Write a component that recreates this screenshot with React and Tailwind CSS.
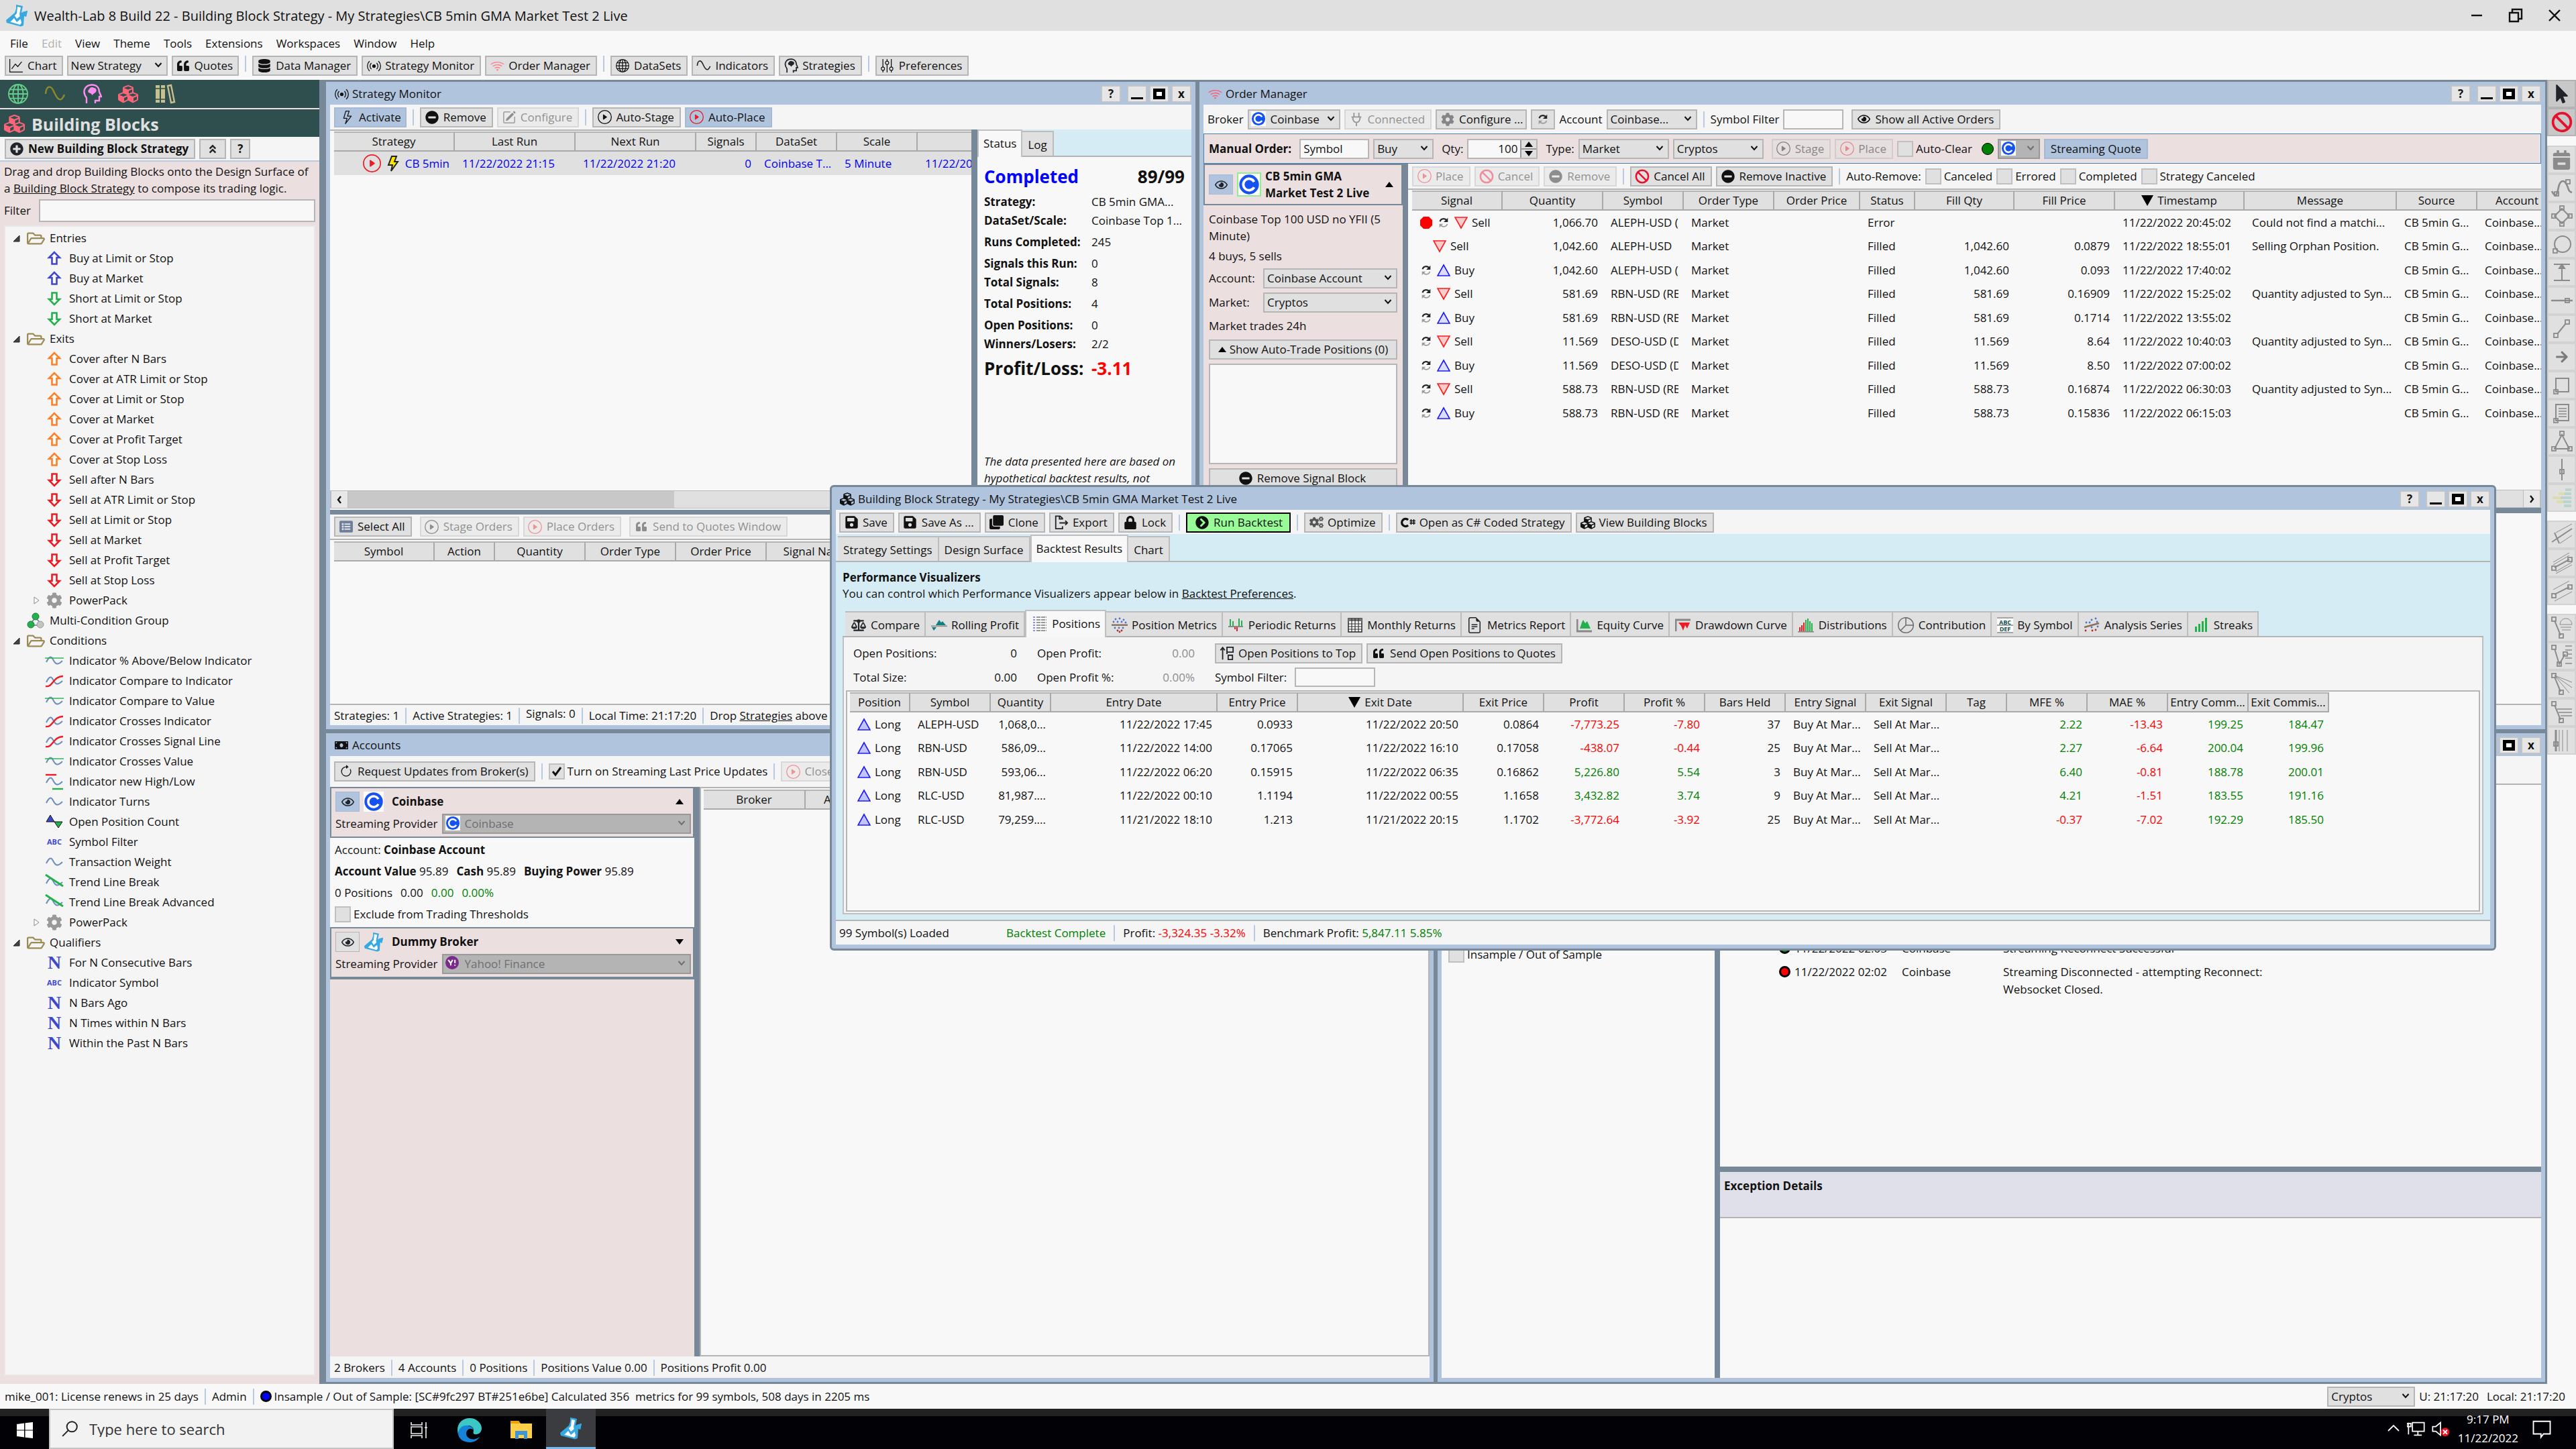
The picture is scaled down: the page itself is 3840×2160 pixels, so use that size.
import React from "react";
import {
  FaQuoteLeft, FaDatabase, FaPlusCircle, FaMinusCircle, FaAngleDoubleUp, FaCubes, FaSave, FaClone, FaLock,
  FaChevronCircleRight, FaCogs, FaCog, FaRegFolderOpen, FaRegEye, FaBalanceScale,
  FaMoneyBill, FaArrowRight, FaListAlt, FaMousePointer, FaCalendarMinus,
} from "react-icons/fa";
import {
  BsBroadcast, BsWifi, BsLightning, BsPlayCircle, BsPencilSquare, BsGlobe, BsGraphUp, BsFileEarmarkText,
  BsPieChart, BsArrowClockwise, BsSliders,
} from "react-icons/bs";

/* ---------- drawings ---------- */

const Svg = ({ size = 24, box = 24, className = "", children }) => (
  <svg width={size} height={size} viewBox={`0 0 ${box} ${box}`} fill="none" className={`shrink-0 ${className}`} aria-hidden="true">
    {children}
  </svg>
);

const Flask = ({ size = 34 }) => (
  <Svg size={size} box={34}>
    <path d="M16 1 L26 3 L25 8 L24 13 L33 10 L31 19 L28 18 L27 32 L23 33.500 L2 28 L1 24 L14 13 L16 7 Z" fill="#35a9e0" />
    <path d="M18 4 L23 5 L21 15 L24 28 L22 31 L5 26 L17 14 Z" fill="#ffffff" />
    <path d="M3 25 L13 16 L17 22 L27 14 L25 12 L33 10 L31 19 L29 17 L17 27 L13 21 L6 28 Z" fill="#35a9e0" />
  </Svg>
);

const Coinbase = ({ size = 26 }) => (
  <Svg size={size} className="bg-white">
    <circle cx="12" cy="12" r="11" fill="#1652f0" />
    <path d="M17.600 9 A6.400 6.400 0 1 0 17.600 15" stroke="#fff" strokeWidth="2.800" />
  </Svg>
);

const Yahoo = () => (
  <Svg size={20}>
    <circle cx="12" cy="12" r="12" fill="#7b2a8b" />
    <path d="M5 7 L9.500 13 V17 M13 7 L9.500 13 M17 7 V13 M17 15.500 V17.500" stroke="#fff" strokeWidth="2.500" />
  </Svg>
);

const Ban = ({ size = 22 }) => (
  <Svg size={size}>
    <circle cx="12" cy="12" r="10" stroke="#e8112d" strokeWidth="2.800" />
    <path d="M5 5 L19 19" stroke="#e8112d" strokeWidth="2.800" />
  </Svg>
);

const Plug = () => (
  <Svg size={22}>
    <path d="M8 1 V8 M16 1 V8 M4 8 H20 M6 8 C6 14 8 17 12 17 C16 17 18 14 18 8 M12 17 V23" stroke="#212529" strokeWidth="2" />
  </Svg>
);

const Export = () => (
  <Svg size={22}>
    <path d="M14 7 V5 L10 1.500 H3 V22 H14 V18 M9 2 V6 H14 M9 12.500 H22 M18.500 9 L22 12.500 L18.500 16" stroke="#212529" strokeWidth="2" />
  </Svg>
);

const Tri = ({ up, strong }) => (
  <Svg size={20} box={20}>
    {up ? (
      <path d="M10 2 L19 18 H1 Z" fill={strong ? "#c3c3fb" : "#dcdcfb"} stroke="#1a1aff" strokeWidth="1.600" />
    ) : (
      <path d="M10 18 L19 2 H1 Z" fill="#fbcaca" stroke="#ff1a1a" strokeWidth="1.600" />
    )}
  </Svg>
);

const Repeat = ({ size = 18 }) => (
  <Svg size={size} box={20}>
    <path d="M4 8 C5 3 12 2 15 6" stroke="#212529" strokeWidth="2.400" />
    <path d="M17 2 V9 H10 Z" fill="#212529" />
    <path d="M16 12 C15 17 8 18 5 14" stroke="#9a9a9a" strokeWidth="1.800" />
    <path d="M3 18 V12 H9 Z" fill="#9a9a9a" />
  </Svg>
);

const Arrow = ({ down, color }) => (
  <Svg size={22} box={22}>
    <path
      d={down ? "M11 20 L3 12 H7.500 V2.500 H14.500 V12 H19 Z" : "M11 2 L3 10 H7.500 V19.500 H14.500 V10 H19 Z"}
      stroke={color}
      strokeWidth="2.600"
      fill="#fff"
    />
  </Svg>
);

const wave = "M2 16 C6 8 9 6 12 12 S18 22 26 14";
const Ind = ({ kind }) => (
  <Svg size={28} box={28}>
    <path d={wave} stroke="#6c8ebf" strokeWidth="2" />
    {kind === "line" && <path d="M0 10 H28" stroke="#22b14c" strokeWidth="1.400" />}
    {kind === "cross" && <path d="M1 22 C12 24 12 7 27 7" stroke="#ed1c24" strokeWidth="2.400" />}
    {kind === "hilo" && (
      <>
        <path d="M1 4 H17" stroke="#ed1c24" strokeWidth="2.400" />
        <path d="M11 25 H27" stroke="#22b14c" strokeWidth="2.400" />
      </>
    )}
    {kind === "trend" && <path d="M1 3 L27 20" stroke="#22b14c" strokeWidth="3" />}
  </Svg>
);

const Count = () => (
  <Svg size={28} box={28}>
    <path d="M2 14 L8 4 L14 14 Z" fill="#3f48cc" stroke="#111" />
    <path d="M14 14 H26 L20 23 Z" fill="#22b14c" stroke="#111" />
  </Svg>
);

const Group = () => (
  <Svg size={26} box={26}>
    <path d="M13 8 L4 20 H22 Z" stroke="#6c7a9c" strokeWidth="1.600" />
    <circle cx="13" cy="7" r="5" fill="#22b14c" stroke="#1c7a38" />
    <circle cx="6" cy="19" r="5" fill="#22b14c" stroke="#1c7a38" />
    <circle cx="20" cy="19" r="5" fill="#c3c3c3" stroke="#999" />
  </Svg>
);

const Head = ({ size = 30, color = "#ff8cf0" }) => (
  <Svg size={size} box={30}>
    <path d="M7 29 V21 C-1 10 6 1 16 1.500 C24 2 26 8 26 12 L29 19 H26 V25 H20 V29" stroke={color} strokeWidth="2.400" />
    <path d="M11 8 C12 5 16 4 18 6 C22 6 23 11 20 13 C18 15 17 14 16 17 L13 14 C9 14 8 10 11 8 Z" fill={color} />
  </Svg>
);

const Sine = ({ color = "#8a8a2a", size = 32 }) => (
  <Svg size={size} box={32}>
    <path d="M2 16 C3 3 10 3 14 12 S24 32 30 17" stroke={color} strokeWidth="2.400" />
  </Svg>
);

const Books = () => (
  <Svg size={32} box={32}>
    <path d="M2 3 H8 V29 H2 Z M10 3 H16 V29 H10 Z" fill="#c9bf8f" />
    <path d="M20 4 L25 3 L30 28 L25 29 Z" stroke="#c9bf8f" strokeWidth="2.400" />
    <path d="M2 8 H16 M2 24 H16" stroke="#2f4f4f" strokeWidth="1.400" />
  </Svg>
);

const ToTop = () => (
  <Svg size={22}>
    <path d="M5 22 V3 M1.500 7 L5 2.500 L8.500 7 M12 2 H22 V10 H12 Z M14 15 H21 V22 H14 Z M12 13 V10" stroke="#212529" strokeWidth="2" />
  </Svg>
);

const CSharp = () => (
  <Svg size={24}>
    <path d="M12 8 A5.500 5.500 0 1 0 12 16" stroke="#111" strokeWidth="3.400" />
    <path d="M16.500 7 V15 M20.500 7 V15 M14.500 9.500 H23 M14.500 12.700 H23" stroke="#111" strokeWidth="1.500" />
  </Svg>
);

const bars = (list, color) => list.map(([x, y, h]) => <rect key={`${x}-${y}`} x={x} y={y} width="2" height={h} fill={color} />);
const dots = (list, color) => list.map(([x, y]) => <circle key={`${x}-${y}`} cx={x} cy={y} r="1.400" fill={color} />);

const TabIcon = {
  compare: <FaBalanceScale size={22} className="text-[#212529]" />,
  rolling: (
    <Svg>
      <path d="M7 12 L12 4 L15 8 L17 6 L22 12 Z M1 15 H8 L4 20 Z" fill="#0f8080" />
      <rect y="12.500" width="24" height="1.600" fill="#888" />
    </Svg>
  ),
  positions: (
    <Svg>
      {[2, 6, 10, 14, 18, 22].map((y) => (
        <g key={y}>
          <rect x="2" y={y - 1} width="3" height="2" fill="#8c8cff" />
          <path d={`M7 ${y} H22`} stroke="#777" strokeWidth="1.500" strokeDasharray="6 1" />
        </g>
      ))}
    </Svg>
  ),
  metrics: (
    <Svg>
      {dots([[6, 3], [12, 2], [18, 4], [3, 7], [9, 7], [15, 7], [21, 8], [5, 16], [11, 16], [17, 16]], "#4a74c9")}
      {dots([[9, 20], [15, 20], [12, 22]], "#b02a2a")}
      <rect y="10.500" width="24" height="2.400" fill="#8c6f5a" />
    </Svg>
  ),
  periodic: (
    <Svg>
      {bars([[3, 3, 10], [7, 6, 7], [16, 2, 11], [20, 5, 8]], "#22b14c")}
      {bars([[10, 15, 3], [13, 15, 6]], "#ed1c24")}
      <rect x="1" y="13" width="22" height="2" fill="#888" />
    </Svg>
  ),
  monthly: (
    <Svg>
      <rect x="2" y="2" width="20" height="20" fill="#fff" stroke="#333" strokeWidth="1.600" />
      <rect x="2" y="2" width="20" height="4" fill="#777" />
      <path d="M7 2 V22 M12 2 V22 M17 2 V22 M2 10 H22 M2 14 H22 M2 18 H22" stroke="#333" strokeWidth="1.200" />
    </Svg>
  ),
  report: <BsFileEarmarkText size={24} className="text-[#212529]" />,
  equity: (
    <Svg>
      <path d="M1 3 V21 H23" stroke="#888" strokeWidth="3" />
      <path d="M5 17 L8 8 L10 4 L13 9 L16 6 L21 17 Z" fill="#22b14c" />
    </Svg>
  ),
  drawdown: (
    <Svg>
      <path d="M1 21 V4 H23" stroke="#888" strokeWidth="3" />
      <path d="M5 8 H22 L18 17 L15 12 L12 20 L9 13 Z" fill="#ed1c24" />
    </Svg>
  ),
  dist: (
    <Svg>
      {bars([[2, 15, 6], [5, 12, 9], [8, 8, 13]], "#ed1c24")}
      {bars([[11, 4, 17], [14, 2, 19], [17, 6, 15], [20, 9, 12]], "#22b14c")}
      <rect y="21" width="24" height="1.600" fill="#888" />
    </Svg>
  ),
  contribution: <BsPieChart size={24} className="text-[#6a6a6a]" />,
  symbol: (
    <svg width="24" height="24" viewBox="0 0 24 24" className="shrink-0 bg-white" aria-hidden="true">
      <path d="M0 1 H24 M0 12 H24 M0 23 H24" stroke="#888" strokeWidth="1.400" />
      <text x="12" y="10.500" fontSize="9" fontWeight="700" textAnchor="middle" fill="#0f4f50">ABC</text>
      <text x="12" y="21" fontSize="9" fontWeight="700" textAnchor="middle" fill="#0f4f50">DEF</text>
    </svg>
  ),
  analysis: (
    <Svg>
      {dots([[12, 4], [18, 2], [4, 8], [9, 8], [20, 7], [12, 15], [21, 14]], "#4a74c9")}
      {dots([[3, 20], [13, 20], [18, 19]], "#b02a2a")}
      <path d="M1 15 L23 9" stroke="#8c6f5a" strokeWidth="2.400" />
    </Svg>
  ),
  streaks: (
    <Svg>
      <rect x="3" y="14" width="3" height="8" fill="#22b14c" />
      <rect x="8" y="10" width="3" height="12" fill="#22b14c" />
      <rect x="13" y="6" width="3" height="16" fill="#22b14c" />
      <rect x="18" y="1" width="3" height="21" fill="#22b14c" />
    </Svg>
  ),
};

const sq = (x, y) => <rect key={`${x}-${y}`} x={x - 3} y={y - 3} width="6" height="6" strokeWidth="1.800" />;
const drawTools = [
  [
    ["Calendar", <FaCalendarMinus key="i" size={29} className="text-[#8b8b8b]" />],
    ["Curve", <g key="i"><path d="M2 22 C8 34 10 26 12 16 S20 4 24 12 S26 22 32 24" strokeWidth="2.600" />{sq(9, 26)}{sq(26, 8)}</g>],
    ["Diamond", <g key="i"><path d="M17 6 L28 17 L17 28 L6 17 Z" />{sq(17, 5)}{sq(29, 17)}{sq(17, 29)}{sq(5, 17)}</g>],
    ["Circle", <g key="i"><circle cx="18" cy="17" r="12" />{sq(7, 27)}</g>],
    ["Height", <g key="i"><path d="M5 5 H29 M5 29 H29 M17 6 V28" /><path d="M17 5 L13 11 H21 Z" fill="#8b8b8b" /></g>],
    ["Horizontal line", <g key="i"><path d="M1 17 H33" strokeWidth="2.400" />{sq(25, 17)}</g>],
    ["Line", <g key="i"><path d="M10 25 L23 9" />{sq(8, 27)}{sq(25, 7)}</g>],
    ["Arrow", <FaArrowRight key="i" size={20} className="text-[#7a7a7a]" />],
    ["Rectangle", <g key="i"><rect x="8" y="7" width="19" height="20" />{sq(8, 27)}</g>],
    ["Note", <g key="i"><rect x="8" y="4" width="19" height="24" /><path d="M12 10 H24 M12 14 H24 M12 18 H24 M12 22 H24" strokeWidth="1.600" />{sq(8, 28)}</g>],
    ["Triangle", <g key="i"><path d="M17 7 L28 28 H6 Z" />{sq(17, 5)}{sq(5, 28)}{sq(29, 28)}</g>],
    ["Vertical line", <g key="i"><path d="M17 1 V33" />{sq(17, 20)}</g>],
    ["Volume profile", <g key="i" stroke="none"><rect x="22" y="3" width="9" height="4" fill="#b9d3cf" /><rect x="12" y="9" width="9" height="4" fill="#dedbb0" /><rect x="21" y="9" width="10" height="4" fill="#b9d3cf" /><rect x="3" y="15" width="12" height="4" fill="#dedbb0" /><rect x="15" y="15" width="16" height="4" fill="#b9d3cf" /><rect x="9" y="21" width="10" height="4" fill="#dedbb0" /><rect x="19" y="21" width="12" height="4" fill="#b9d3cf" /><rect x="20" y="27" width="11" height="4" fill="#b9d3cf" /></g>],
  ],
  [
    ["Pitchfork", <g key="i"><path d="M2 28 L32 8 M6 14 L13 30" /><path d="M8 14 L32 1 M14 30 L32 18" strokeWidth="1" /></g>],
    ["Parallel bands", <g key="i"><path d="M6 24 L28 12" />{sq(5, 25)}{sq(29, 12)}<path d="M4 16 L28 2 M4 20 L28 6 M8 30 L32 16 M8 33 L32 20" strokeWidth="1" /></g>],
    ["Channel", <g key="i"><path d="M6 22 L28 11" />{sq(5, 24)}{sq(29, 11)}<path d="M4 15 L28 2 M6 32 L32 18" strokeWidth="1" /></g>],
  ],
  [
    ["Fibonacci arcs", <g key="i"><path d="M6 6 L15 28" />{sq(5, 4)}{sq(16, 29)}<path d="M14 12 C15 0 31 0 32 12 Z M15 16 H31 M17 20 H30" strokeWidth="1" /></g>],
    ["Fibonacci extension", <g key="i"><path d="M6 6 L13 29 L22 14" />{sq(5, 4)}{sq(13, 29)}{sq(22, 14)}<path d="M22 2 H32 M22 8 H32 M24 14 H32 M22 20 H32 M22 28 H32" strokeWidth="1.400" /></g>],
    ["Fan", <g key="i"><path d="M6 6 L15 28" />{sq(5, 4)}{sq(16, 29)}<path d="M6 4 L32 14 M6 4 L32 22 M6 4 L28 30" strokeWidth="1" /></g>],
    ["Retracement", <g key="i"><path d="M6 6 L15 28" />{sq(5, 4)}{sq(16, 29)}<path d="M10 12 H32 M12 17 H32 M15 22 H32" strokeWidth="1.400" /></g>],
    ["Time zones", <g key="i"><path d="M8 1 V33" strokeWidth="3" />{sq(8, 22)}<path d="M13 1 V33 M18 1 V33 M25 1 V33" strokeWidth="1" /></g>],
  ],
];

/* ---------- controls ---------- */

const Btn = ({ icon, children, disabled, tone = "", pad = "pl-1 pr-2", className = "" }) => (
  <button
    type="button"
    disabled={disabled}
    className={`flex h-[30px] shrink-0 items-center justify-center gap-[5px] border-2 whitespace-nowrap ${pad} ${
      tone || "border-[#b6b6b6] bg-[#e0e0e0]"
    } ${disabled ? "opacity-45" : ""} ${className}`}
  >
    {icon && <span className="flex w-6 shrink-0 justify-center">{icon}</span>}
    {children}
  </button>
);

const blueTone = "border-[#a6bad6] bg-[#b0c4de]";
const Sep = () => <span className="mx-[3px] h-6 w-[2px] shrink-0 bg-[#b9cbe2]" />;

const Chevron = () => (
  <svg width="12" height="12" viewBox="0 0 12 12" fill="none" className="pointer-events-none absolute top-2 right-2" aria-hidden="true">
    <path d="M1.500 3 L6 8 L10.500 3" stroke="currentColor" strokeWidth="2" />
  </svg>
);

const Select = ({ value, label, icon, width, muted }) => (
  <span className={`relative flex h-[30px] shrink-0 ${width} ${muted ? "text-[#6f6f6f]" : ""}`}>
    <select
      aria-label={label}
      disabled={muted}
      defaultValue={value}
      className={`h-full w-full appearance-none border-2 pr-6 leading-6 opacity-100 ${icon ? "pl-8" : "pl-1"} ${
        muted ? "border-[#999] bg-[#b4b4b4]" : "border-[#b6b6b6] bg-[#e0e0e0]"
      }`}
    >
      <option value={value}>{value}</option>
    </select>
    {icon && <span className="pointer-events-none absolute top-[3px] left-[5px]">{icon}</span>}
    <Chevron />
  </span>
);

const Check = ({ children, checked }) => (
  <label className="flex shrink-0 items-center gap-1 whitespace-nowrap">
    <span className="relative h-6 w-6">
      <input type="checkbox" defaultChecked={checked} className="peer block h-6 w-6 appearance-none border-2 border-[#c0c0c0] bg-[#e0e0e0]" />
      <svg width="24" height="24" viewBox="0 0 24 24" fill="none" className="pointer-events-none absolute top-0 left-0 hidden peer-checked:block" aria-hidden="true">
        <path d="M6 12 L10 17 L18 6" stroke="#111" strokeWidth="3" />
      </svg>
    </span>
    {children}
  </label>
);

const EyeBtn = ({ on }) => (
  <button type="button" aria-label="Show" className={`flex h-[30px] w-9 shrink-0 items-center justify-center border ${on ? blueTone : "border-[#b6b6b6] bg-[#e0e0e0]"}`}>
    <FaRegEye size={19} className="text-[#212529]" />
  </button>
);

const Ctl = ({ label, children }) => (
  <button type="button" aria-label={label} className="flex h-[26px] w-[30px] items-center justify-center border-2 border-[#c4c4c4] bg-[#e6e6e6] font-bold">
    {children}
  </button>
);

const Win = ({ icon, title, className = "", children }) => (
  <section className={`flex min-h-0 min-w-0 flex-col overflow-hidden border-[3px] border-[#778899] bg-[#b0c4de] px-[6px] pb-[6px] ${className}`}>
    <header className="flex h-[34px] shrink-0 items-center justify-between pt-[2px] pl-[6px]">
      <h2 className="flex items-center gap-[5px] whitespace-nowrap">
        <span className="flex w-[22px] justify-center">{icon}</span>
        {title}
      </h2>
      <div className="flex gap-[3px]">
        <Ctl label="Help">?</Ctl>
        <span className="w-[3px]" />
        <Ctl label="Minimize"><span className="mt-3 h-[3px] w-[18px] bg-black" /></Ctl>
        <Ctl label="Maximize"><span className="h-4 w-[18px] border-[5px] border-black bg-white" /></Ctl>
        <Ctl label="Close">x</Ctl>
      </div>
    </header>
    <div className="flex min-h-0 flex-1 flex-col bg-[#f5f5f5]">{children}</div>
  </section>
);

const Th = ({ children, sorted }) => (
  <th className="h-[30px] overflow-hidden border-t-2 border-r-2 border-b-2 border-t-[#b4b4b4] border-r-[#aaa] border-b-[#aaa] bg-[#e0e0e0] p-0 px-1 text-center font-normal whitespace-nowrap">
    <span className="flex items-center justify-center gap-[6px]">
      {sorted && <span className="h-0 w-0 border-x-[9px] border-t-[16px] border-x-transparent border-t-black" />}
      {children}
    </span>
  </th>
);

const Td = ({ children, right, color = "" }) => (
  <td className={`p-0 pr-2 pl-[11px] ${right ? "text-right" : "text-left"} ${color}`}>
    <div className="overflow-hidden whitespace-nowrap">{children}</div>
  </td>
);

const Table = ({ cols, children }) => (
  <table className="w-px table-fixed border-separate border-spacing-0">
    <colgroup>
      {cols.map(([name, width]) => <col key={name} className={width} />)}
    </colgroup>
    <thead>
      <tr>
        {cols.map(([name, , sorted]) => <Th key={name} sorted={sorted}>{name}</Th>)}
      </tr>
    </thead>
    {children}
  </table>
);

const Scroll = ({ children }) => <div className="flex h-[27px] shrink-0 border border-[#bcbcbc] bg-[#e0e0e0]">{children}</div>;

const ScrollBtn = ({ label, d }) => (
  <button type="button" aria-label={label} className="flex w-[26px] items-center justify-center border-x border-[#bcbcbc] bg-[#e8e8e8]">
    <Svg size={14} box={14}><path d={d} stroke="#111" strokeWidth="2.400" /></Svg>
  </button>
);

const Tab = ({ children, icon, active }) => (
  <button
    type="button"
    role="tab"
    aria-selected={!!active}
    className={`flex shrink-0 items-center gap-[6px] border-t-2 border-r-2 pt-[2px] whitespace-nowrap ${icon ? "px-[7px]" : active ? "px-[7px]" : "px-[8px]"} ${
      active ? "-mb-[2px] h-[41px] border-[#c0c0c0] border-l-2 bg-[#f8f8f8] pb-1" : "h-[37px] border-[#bdbdbd] bg-[#e0e0e0]"
    }`}
  >
    {icon && <span className="flex w-[25px] justify-center">{icon}</span>}
    {children}
  </button>
);

const Caret = ({ down }) => (
  <span className={`block h-0 w-0 border-x-[6px] border-x-transparent ${down ? "border-t-[8px] border-t-black" : "border-b-[8px] border-b-black"}`} />
);

/* ---------- left panel ---------- */

const up = (name, color) => [name, <Arrow key="a" color={color} />];
const dn = (name, color) => [name, <Arrow key="a" down color={color} />];
const abc = (name) => [name, <span key="a" className="text-[11px] font-bold text-[#3f48cc]">ABC</span>];
const big = (name) => [name, <span key="a" className="font-['Liberation_Serif',serif] text-[28px] font-bold text-[#3f48cc]">N</span>];
const ind = (name, kind) => [name, <Ind key="a" kind={kind} />];
const gear = [["PowerPack", <FaCog key="a" size={24} className="text-[#999]" />, true]];

const tree = [
  ["Entries", [
    up("Buy at Limit or Stop", "#3f48cc"), up("Buy at Market", "#3f48cc"),
    dn("Short at Limit or Stop", "#22b14c"), dn("Short at Market", "#22b14c"),
  ]],
  ["Exits", [
    ...["Cover after N Bars", "Cover at ATR Limit or Stop", "Cover at Limit or Stop", "Cover at Market", "Cover at Profit Target", "Cover at Stop Loss"].map((n) => up(n, "#ff7f27")),
    ...["Sell after N Bars", "Sell at ATR Limit or Stop", "Sell at Limit or Stop", "Sell at Market", "Sell at Profit Target", "Sell at Stop Loss"].map((n) => dn(n, "#ed1c24")),
    ...gear,
  ]],
  ["Multi-Condition Group", null],
  ["Conditions", [
    ind("Indicator % Above/Below Indicator", "line"), ind("Indicator Compare to Indicator", "cross"),
    ind("Indicator Compare to Value", "line"), ind("Indicator Crosses Indicator", "cross"),
    ind("Indicator Crosses Signal Line", "cross"), ind("Indicator Crosses Value", "line"),
    ind("Indicator new High/Low", "hilo"), ind("Indicator Turns"),
    ["Open Position Count", <Count key="a" />], abc("Symbol Filter"), ind("Transaction Weight"),
    ind("Trend Line Break", "trend"), ind("Trend Line Break Advanced", "trend"), ...gear,
  ]],
  ["Qualifiers", [
    big("For N Consecutive Bars"), abc("Indicator Symbol"), big("N Bars Ago"), big("N Times within N Bars"), big("Within the Past N Bars"),
  ]],
];

const Tree = () => (
  <ul className="min-h-0 flex-1 border-2 border-[#eae6e6] bg-[#f5f5f5] pt-[2px]">
    {tree.map(([name, kids]) => (
      <li key={name}>
        <div className="flex h-[30px] items-center pl-[11px]">
          <span className="flex w-[20px] shrink-0">
            {kids && (
              <svg width="11" height="11" viewBox="0 0 11 11" aria-hidden="true"><path d="M10 1 V10 H1 Z" fill="#444" stroke="#222" /></svg>
            )}
          </span>
          <span className="flex w-[28px] shrink-0 justify-center">{kids ? <FaRegFolderOpen size={27} className="text-[#9b8c56]" /> : <Group />}</span>
          <span className="pl-[7px]">{name}</span>
        </div>
        {kids && (
          <ul>
            {kids.map(([kid, icon, closed]) => (
              <li key={kid} className="flex h-[30px] items-center pl-[42px]">
                <span className="flex w-[16px] shrink-0">
                  {closed && (
                    <svg width="9" height="12" viewBox="0 0 9 12" aria-hidden="true"><path d="M1 1 L8 6 L1 11 Z" fill="#fff" stroke="#888" /></svg>
                  )}
                </span>
                <span className="flex w-[30px] shrink-0 items-center justify-center">{icon}</span>
                <span className="pl-[7px]">{kid}</span>
              </li>
            ))}
          </ul>
        )}
      </li>
    ))}
  </ul>
);

const BlocksPanel = () => (
  <aside className="flex w-[483px] shrink-0 flex-col border-r-[7px] border-[#778899] bg-[#ecdfdf]">
    <div className="flex h-[42px] shrink-0 items-center gap-6 bg-[#2f4f4f] pl-3">
      <BsGlobe size={30} className="text-[#66cc8a]" />
      <Sine />
      <Head />
      <FaCubes size={30} className="text-[#ff6478]" />
      <Books />
    </div>
    <div className="mt-[2px] flex h-[41px] shrink-0 items-center gap-[10px] bg-[#2f4f4f] pt-[2px] pl-[6px] text-[25px] font-bold text-[#e0e0e0]">
      <FaCubes size={31} className="text-[#ff6478]" />
      Building Blocks
    </div>
    <div className="flex h-[37px] shrink-0 items-center gap-[6px] border-b-2 border-[#b9cbe2] bg-[#f5f5f5] pl-[7px]">
      <Btn icon={<FaPlusCircle size={20} className="text-[#212529]" />} className="font-bold">New Building Block Strategy</Btn>
      <Btn pad="px-[10px]"><FaAngleDoubleUp size={16} className="text-[#212529]" /></Btn>
      <Btn pad="px-[9px]" className="font-bold">?</Btn>
    </div>
    <div className="flex min-h-0 flex-1 flex-col px-[6px] pb-3">
      <p className="mt-[2px] leading-[25px] whitespace-nowrap">
        Drag and drop Building Blocks onto the Design Surface of<br />a <a href="#blocks" className="underline">Building Block Strategy</a> to compose its trading logic.
      </p>
      <div className="mt-1 mb-[5px] flex items-center gap-3">
        <label htmlFor="filter">Filter</label>
        <input id="filter" className="h-[34px] min-w-0 flex-1 border-2 border-[#b6b6b6] bg-[#f8f8f8]" />
      </div>
      <Tree />
    </div>
  </aside>
);

/* ---------- strategy monitor ---------- */

const stats = [
  ["Strategy:", "CB 5min GMA...", "h-7"],
  ["DataSet/Scale:", "Coinbase Top 1...", "h-7"],
  ["Runs Completed:", "245", "h-9"],
  ["Signals this Run:", "0", "h-7"],
  ["Total Signals:", "8", "h-7"],
  ["Total Positions:", "4", "h-9"],
  ["Open Positions:", "0", "h-7"],
  ["Winners/Losers:", "2/2", "h-7"],
];

const StrategyMonitor = () => (
  <Win icon={<BsBroadcast size={21} />} title="Strategy Monitor">
    <div className="flex h-[37px] shrink-0 items-center gap-[6px] pl-[6px]">
      <Btn icon={<BsLightning size={20} />} tone={blueTone} pad="px-[6px]">Activate</Btn>
      <Sep />
      <Btn icon={<FaMinusCircle size={20} />}>Remove</Btn>
      <Btn icon={<BsPencilSquare size={20} />} disabled>Configure</Btn>
      <Sep />
      <Btn icon={<BsPlayCircle size={21} />}>Auto-Stage</Btn>
      <Btn icon={<BsPlayCircle size={21} className="text-[#ed1c24]" />} tone={blueTone}>Auto-Place</Btn>
    </div>
    <div className="flex h-[567px] shrink-0">
      <div className="flex min-w-0 flex-1 flex-col border-t-2 border-[#b4b4b4] bg-[#f8f8f8]">
        <div className="min-h-0 flex-1 overflow-hidden pt-[1px] pl-[6px]">
          <Table cols={[["Strategy", "w-[180px]"], ["Last Run", "w-[180px]"], ["Next Run", "w-[180px]"], ["Signals", "w-[90px]"], ["DataSet", "w-[120px]"], ["Scale", "w-[120px]"], [" ", "w-[160px]"]]}>
            <tbody>
              <tr className="h-[35px] bg-[#e0e0e0] text-[#0000f0]">
                <Td><span className="flex items-center justify-end gap-[6px]"><BsPlayCircle size={27} className="text-[#ed1c24]" /><Svg size={24}><path d="M10 1 H17 L14 9 H19 L9 23 L11 14 H5 Z" fill="#ffe800" stroke="#222" strokeWidth="2" /></Svg>CB 5min</span></Td>
                <Td>11/22/2022 21:15</Td>
                <Td>11/22/2022 21:20</Td>
                <Td right>0</Td>
                <Td>Coinbase T...</Td>
                <Td>5 Minute</Td>
                <Td>11/22/2022</Td>
              </tr>
            </tbody>
          </Table>
        </div>
        <Scroll>
          <ScrollBtn label="Scroll left" d="M9 2 L5 7 L9 12" />
          <span className="w-[486px] bg-[#c8c8c8]" />
        </Scroll>
        <div className="h-[2px]" />
      </div>
      <div className="w-[9px] shrink-0 bg-[#778899]" />
      <div className="flex w-[319px] shrink-0 flex-col">
        <div role="tablist" className="flex h-[41px] items-end border-b-2 border-[#b4b4b4] bg-[#d6ecf4]">
          <Tab active>Status</Tab>
          <Tab>Log</Tab>
        </div>
        <div className="flex flex-1 flex-col bg-[#f8f8f8] px-[10px] pt-[11px]">
          <div className="flex h-9 items-center justify-between text-[26px] font-bold">
            <span className="text-[#0000ff]">Completed</span><span>89/99</span>
          </div>
          <dl className="pt-[6px]">
            {stats.map(([k, v, h]) => (
              <div key={k} className={`flex items-center whitespace-nowrap ${h}`}>
                <dt className="w-40 shrink-0 font-bold">{k}</dt><dd>{v}</dd>
              </div>
            ))}
          </dl>
          <div className="flex h-11 items-center text-[26px] font-bold whitespace-nowrap">
            <span className="w-40 shrink-0">Profit/Loss:</span><span className="text-[#ff0000]">-3.11</span>
          </div>
          <p className="mt-auto pb-[10px] leading-[25px] whitespace-nowrap italic">The data presented here are based on<br />hypothetical backtest results, not<br />actual account trading.</p>
        </div>
      </div>
    </div>
    <div className="h-[7px] shrink-0 bg-[#778899]" />
    <div className="flex h-[38px] shrink-0 items-center gap-[6px] border-b-2 border-[#b4b4b4] pl-[6px]">
      <Btn icon={<FaListAlt size={20} className="text-[#6d7f9c]" />}>Select All</Btn>
      <span className="w-0" />
      <Btn icon={<BsPlayCircle size={21} />} disabled>Stage Orders</Btn>
      <Btn icon={<BsPlayCircle size={21} className="text-[#ed1c24]" />} disabled>Place Orders</Btn>
      <span className="w-0" />
      <Btn icon={<FaQuoteLeft size={16} />} disabled>Send to Quotes Window</Btn>
    </div>
    <div className="min-h-0 flex-1 overflow-hidden bg-[#f8f8f8] pt-[2px] pl-[6px]">
      <Table cols={[["Symbol", "w-[150px]"], ["Action", "w-[90px]"], ["Quantity", "w-[135px]"], ["Order Type", "w-[135px]"], ["Order Price", "w-[135px]"], ["Signal Name", "w-[150px]"]]} />
    </div>
    <footer className="flex h-8 shrink-0 items-center gap-[6px] border-t-2 border-[#b4b4b4] pt-[2px] pl-[6px] whitespace-nowrap">
      <span>Strategies: 1</span><Sep /><span>Active Strategies: 1</span><Sep /><span className="pb-[6px]">Signals: 0</span><Sep /><span>Local Time: 21:17:20</span><Sep />
      <span>Drop <a href="#strategies" className="underline">Strategies</a> above</span>
    </footer>
  </Win>
);

/* ---------- order manager ---------- */

const orders = [
  ["Sell", "1,066.70", "ALEPH-USD (ALEPH)", "Error", "", "", "11/22/2022 20:45:02", "Could not find a matchi..."],
  ["Sell", "1,042.60", "ALEPH-USD", "Filled", "1,042.60", "0.0879", "11/22/2022 18:55:01", "Selling Orphan Position."],
  ["Buy", "1,042.60", "ALEPH-USD (ALEPH)", "Filled", "1,042.60", "0.093", "11/22/2022 17:40:02", ""],
  ["Sell", "581.69", "RBN-USD (RBN)", "Filled", "581.69", "0.16909", "11/22/2022 15:25:02", "Quantity adjusted to Syn..."],
  ["Buy", "581.69", "RBN-USD (RBN)", "Filled", "581.69", "0.1714", "11/22/2022 13:55:02", ""],
  ["Sell", "11.569", "DESO-USD (DESO)", "Filled", "11.569", "8.64", "11/22/2022 10:40:03", "Quantity adjusted to Syn..."],
  ["Buy", "11.569", "DESO-USD (DESO)", "Filled", "11.569", "8.50", "11/22/2022 07:00:02", ""],
  ["Sell", "588.73", "RBN-USD (RBN)", "Filled", "588.73", "0.16874", "11/22/2022 06:30:03", "Quantity adjusted to Syn..."],
  ["Buy", "588.73", "RBN-USD (RBN)", "Filled", "588.73", "0.15836", "11/22/2022 06:15:03", ""],
];

const orderCols = [
  ["Signal", "w-[135px]"], ["Quantity", "w-[150px]"], ["Symbol", "w-[120px]"], ["Order Type", "w-[135px]"], ["Order Price", "w-[128px]"],
  ["Status", "w-[82px]"], ["Fill Qty", "w-[148px]"], ["Fill Price", "w-[150px]"], ["Timestamp", "w-[193px]", true], ["Message", "w-[227px]"],
  ["Source", "w-[120px]"], ["Account", "w-[120px]"],
];

const OrderManager = () => (
  <Win icon={<BsWifi size={21} className="text-[#ff5a72]" />} title="Order Manager">
    <div className="flex h-[43px] shrink-0 items-center gap-[6px] pl-[6px]">
      <span>Broker</span>
      <Select label="Broker" value="Coinbase" icon={<Coinbase size={22} />} width="w-[138px]" />
      <Btn icon={<Plug />} disabled>Connected</Btn>
      <Btn icon={<FaCog size={20} className="text-[#858585]" />} pad="px-1">Configure ...</Btn>
      <Btn pad="px-[7px]"><Repeat /></Btn>
      <span>Account</span>
      <Select label="Account" value="Coinbase..." width="w-[135px]" />
      <Sep />
      <label htmlFor="symf">Symbol Filter</label>
      <input id="symf" className="h-[30px] w-[90px] border-2 border-[#b6b6b6] bg-[#f8f8f8]" />
      <span className="w-0" />
      <Btn icon={<FaRegEye size={19} />}>Show all Active Orders</Btn>
    </div>
    <div className="flex h-[45px] shrink-0 items-center gap-[6px] border border-[#4682b4] bg-[#ecdfdf] pl-[7px] whitespace-nowrap">
      <label htmlFor="msym" className="pr-[6px] font-bold">Manual Order:</label>
      <input id="msym" defaultValue="Symbol" className="h-[30px] w-[104px] border-2 border-[#b6b6b6] bg-[#f8f8f8] px-1" />
      <Select label="Side" value="Buy" width="w-[90px]" />
      <label htmlFor="qty" className="pl-[6px]">Qty:</label>
      <span className="flex h-[30px] w-[105px] border-2 border-[#b6b6b6] bg-[#f8f8f8]">
        <input id="qty" defaultValue="100" className="w-0 flex-1 bg-transparent pr-1 text-right" />
        <span className="flex w-6 flex-col border-l-2 border-[#999]">
          <button type="button" aria-label="More" className="flex flex-1 items-center justify-center border-b-2 border-[#999] bg-[#e0e0e0]"><Caret /></button>
          <button type="button" aria-label="Less" className="flex flex-1 items-center justify-center bg-[#e0e0e0]"><Caret down /></button>
        </span>
      </span>
      <span className="pl-[6px]">Type:</span>
      <Select label="Type" value="Market" width="w-[135px]" />
      <Select label="Market" value="Cryptos" width="w-[135px]" />
      <span className="w-0" />
      <Btn icon={<BsPlayCircle size={21} />} disabled>Stage</Btn>
      <Btn icon={<BsPlayCircle size={21} className="text-[#ed1c24]" />} disabled>Place</Btn>
      <Check>Auto-Clear</Check>
      <span className="ml-2 h-[18px] w-[18px] rounded-full border border-black bg-[#008000]" />
      <Select label="Quote provider" value="" icon={<Coinbase size={22} />} width="w-[63px]" muted />
      <Btn tone={blueTone} pad="px-2">Streaming Quote</Btn>
    </div>
    <div className="flex h-[513px] shrink-0">
      <div className="flex w-[297px] shrink-0 flex-col bg-[#ecdfdf]">
        <div className="flex h-[62px] shrink-0 items-center gap-[6px] border-2 border-[#778899] pl-[6px] font-bold">
          <EyeBtn on />
          <span className="border-2 border-[#90ee90]"><Coinbase size={32} /></span>
          <span className="flex-1 leading-[25px]">CB 5min GMA<br />Market Test 2 Live</span>
          <span className="flex pr-3"><Caret /></span>
        </div>
        <div className="flex min-h-0 flex-1 flex-col overflow-hidden px-2 pt-[8px]">
          <p className="leading-[25px]">Coinbase Top 100 USD no YFII (5<br />Minute)</p>
          <p className="pt-[6px]">4 buys, 5 sells</p>
          <div className="flex items-center justify-between pt-[6px]"><span>Account:</span><Select label="Account" value="Coinbase Account" width="w-[200px]" /></div>
          <div className="flex items-center justify-between pt-[6px]"><span>Market:</span><Select label="Market" value="Cryptos" width="w-[200px]" /></div>
          <p className="pt-[8px]">Market trades 24h</p>
          <Btn pad="px-1" className="mt-2"><Caret />Show Auto-Trade Positions (0)</Btn>
          <div className="mt-[6px] h-[150px] shrink-0 border-2 border-[#b6b6b6] bg-[#f8f8f8]" />
          <Btn icon={<FaMinusCircle size={20} />} className="mt-[6px]">Remove Signal Block</Btn>
        </div>
      </div>
      <div className="w-2 shrink-0 bg-[#778899]" />
      <div className="flex min-w-0 flex-1 flex-col">
        <div className="flex h-[39px] shrink-0 items-center gap-[6px] border-b-2 border-[#b4b4b4] pl-[6px]">
          <Btn icon={<BsPlayCircle size={21} className="text-[#ed1c24]" />} disabled>Place</Btn>
          <Btn icon={<Ban />} disabled>Cancel</Btn>
          <Btn icon={<FaMinusCircle size={20} />} disabled>Remove</Btn>
          <Sep />
          <Btn icon={<Ban />}>Cancel All</Btn>
          <Btn icon={<FaMinusCircle size={20} />}>Remove Inactive</Btn>
          <Sep />
          <span>Auto-Remove:</span>
          {["Canceled", "Errored", "Completed", "Strategy Canceled"].map((c) => <Check key={c}>{c}</Check>)}
        </div>
        <div className="min-h-0 flex-1 overflow-hidden bg-[#f8f8f8] pt-[1px] pl-[6px]">
          <Table cols={orderCols}>
            <tbody>
              {orders.map((o, i) => (
                <tr key={o[6]} className="odd:h-[35px] even:h-9">
                  <Td>
                    <span className="flex items-center gap-[6px]">
                      {i === 0 && <Svg size={20} box={20}><path d="M6 1 H14 L19 6 V14 L14 19 H6 L1 14 V6 Z" fill="#ff0000" /></Svg>}
                      {i === 1 ? <span className="w-[14px]" /> : <span className="flex w-5 justify-center"><Repeat /></span>}
                      <Tri up={o[0] === "Buy"} />
                      {o[0]}
                    </span>
                  </Td>
                  <Td right>{o[1]}</Td>
                  <Td>{o[2]}</Td>
                  <Td>Market</Td>
                  <Td />
                  <Td>{o[3]}</Td>
                  <Td right>{o[4]}</Td>
                  <Td right>{o[5]}</Td>
                  <Td>{o[6]}</Td>
                  <Td>{o[7]}</Td>
                  <Td>CB 5min G...</Td>
                  <Td>Coinbase...</Td>
                </tr>
              ))}
            </tbody>
          </Table>
        </div>
        <Scroll>
          <span className="flex-1" />
          <ScrollBtn label="Scroll right" d="M5 2 L9 7 L5 12" />
        </Scroll>
      </div>
    </div>
    <div className="h-2 shrink-0 bg-[#778899]" />
    <div className="min-h-0 flex-1 bg-[#f8f8f8]" />
    <div className="h-8 shrink-0 border-t-2 border-[#b4b4b4]" />
  </Win>
);

/* ---------- accounts ---------- */

const BrokerCard = ({ on, icon, name, provider, providerIcon }) => (
  <div className="shrink-0 border-2 border-[#778899] px-[6px] pt-[2px] pb-1">
    <div className="flex h-9 items-center gap-[6px]">
      <EyeBtn on={on} />
      {icon}
      <span className="flex-1 pl-[6px] font-bold">{name}</span>
      <span className="flex pr-2"><Caret down={!on} /></span>
    </div>
    <div className="flex items-center gap-[6px]">
      <span className="whitespace-nowrap">Streaming Provider</span>
      <Select label="Streaming Provider" value={provider} icon={providerIcon} width="w-[371px]" muted />
    </div>
  </div>
);

const Accounts = () => (
  <Win icon={<FaMoneyBill size={20} />} title="Accounts">
    <div className="flex h-[46px] shrink-0 items-center gap-[6px] pl-[6px]">
      <Btn icon={<BsArrowClockwise size={20} />}>Request Updates from Broker(s)</Btn>
      <Sep />
      <Check checked>Turn on Streaming Last Price Updates</Check>
      <Sep />
      <Btn icon={<BsPlayCircle size={21} className="text-[#ed1c24]" />} disabled>Close Position</Btn>
    </div>
    <div className="flex min-h-0 flex-1">
      <div className="flex w-[543px] shrink-0 flex-col bg-[#ecdfdf]">
        <BrokerCard on name="Coinbase" icon={<Coinbase size={30} />} provider="Coinbase" providerIcon={<Coinbase size={22} />} />
        <div className="flex h-[133px] shrink-0 flex-col gap-2 bg-[#f8f8f8] pt-[6px] pl-[7px] whitespace-nowrap">
          <p>Account: <b>Coinbase Account</b></p>
          <p className="flex gap-3">
            <span><b>Account Value</b> 95.89</span><span><b>Cash</b> 95.89</span><span><b>Buying Power</b> 95.89</span>
          </p>
          <p className="flex gap-3"><span>0 Positions</span><span>0.00</span><span className="text-[#008000]">0.00</span><span className="text-[#008000]">0.00%</span></p>
          <Check>Exclude from Trading Thresholds</Check>
        </div>
        <BrokerCard name="Dummy Broker" icon={<Flask size={30} />} provider="Yahoo! Finance" providerIcon={<Yahoo />} />
        <div className="h-[2px] bg-[#778899]" />
      </div>
      <div className="w-2 shrink-0 bg-[#778899]" />
      <div className="min-w-0 flex-1 overflow-hidden border-2 border-[#b4b4b4] bg-[#f8f8f8] pt-[2px] pl-1">
        <Table cols={[["Broker", "w-[152px]"], ["Account", "w-[120px]"], ["Position", "w-[150px]"], ["Symbol", "w-[150px]"]]} />
      </div>
    </div>
    <footer className="flex h-8 shrink-0 items-center gap-[6px] pt-[2px] pl-[6px] whitespace-nowrap">
      <span>2 Brokers</span><Sep /><span>4 Accounts</span><Sep /><span>0 Positions</span><Sep /><span>Positions Value 0.00</span><Sep /><span>Positions Profit 0.00</span>
    </footer>
  </Win>
);

/* ---------- log window ---------- */

const LogRow = ({ color, time, children }) => (
  <li className="flex gap-[6px] leading-[26px]">
    <span className={`mt-1 h-[17px] w-[17px] shrink-0 rounded-full border-[3px] border-black ${color}`} />
    <span className="w-[154px]">{time}</span>
    <span className="w-[145px]">Coinbase</span>
    <span>{children}</span>
  </li>
);

const LogWindow = () => (
  <Win icon={<BsFileEarmarkText size={20} />} title="Log Viewer">
    <div className="h-[43px] shrink-0 border-b-2 border-[#b4b4b4]" />
    <div className="flex min-h-0 flex-1">
      <div className="w-[407px] shrink-0 bg-[#f8f8f8] pt-[241px] pl-[10px]">
        <Check>Insample / Out of Sample</Check>
      </div>
      <div className="w-2 shrink-0 bg-[#778899]" />
      <div className="flex min-w-0 flex-1 flex-col">
        <ul className="flex h-[569px] shrink-0 flex-col gap-[9px] bg-[#f8f8f8] pt-[231px] pl-[88px]">
          <LogRow color="bg-[#008000]" time="11/22/2022 02:03">Streaming Reconnect Successful</LogRow>
          <LogRow color="bg-[#ff0000]" time="11/22/2022 02:02">Streaming Disconnected - attempting Reconnect:<br />Websocket Closed.</LogRow>
        </ul>
        <div className="h-2 shrink-0 bg-[#778899]" />
        <div className="h-[69px] shrink-0 border-b-2 border-[#b4b4b4] bg-[#e0e0ea] pt-[9px] pl-[6px] font-bold">Exception Details</div>
        <div className="flex-1 bg-[#f8f8f8]" />
      </div>
    </div>
  </Win>
);

/* ---------- building block strategy window ---------- */

const positions = [
  ["ALEPH-USD", "1,068,0...", "11/22/2022 17:45", "0.0933", "11/22/2022 20:50", "0.0864", "-7,773.25", "-7.80", "37", "2.22", "-13.43", "199.25", "184.47"],
  ["RBN-USD", "586,09...", "11/22/2022 14:00", "0.17065", "11/22/2022 16:10", "0.17058", "-438.07", "-0.44", "25", "2.27", "-6.64", "200.04", "199.96"],
  ["RBN-USD", "593,06...", "11/22/2022 06:20", "0.15915", "11/22/2022 06:35", "0.16862", "5,226.80", "5.54", "3", "6.40", "-0.81", "188.78", "200.01"],
  ["RLC-USD", "81,987....", "11/22/2022 00:10", "1.1194", "11/22/2022 00:55", "1.1658", "3,432.82", "3.74", "9", "4.21", "-1.51", "183.55", "191.16"],
  ["RLC-USD", "79,259....", "11/21/2022 18:10", "1.213", "11/21/2022 20:15", "1.1702", "-3,772.64", "-3.92", "25", "-0.37", "-7.02", "192.29", "185.50"],
];
const posCols = [
  ["Position", "w-[90px]"], ["Symbol", "w-[120px]"], ["Quantity", "w-[90px]"], ["Entry Date", "w-[248px]"], ["Entry Price", "w-[120px]"],
  ["Exit Date", "w-[247px]", true], ["Exit Price", "w-[120px]"], ["Profit", "w-[120px]"], ["Profit %", "w-[120px]"], ["Bars Held", "w-[120px]"],
  ["Entry Signal", "w-[120px]"], ["Exit Signal", "w-[120px]"], ["Tag", "w-[90px]"], ["MFE %", "w-[120px]"], ["MAE %", "w-[120px]"],
  ["Entry Comm...", "w-[120px]"], ["Exit Commis...", "w-[120px]"],
];
const sign = (v) => (v.startsWith("-") ? "text-[#ff0000]" : "text-[#008000]");

const vizTabs = [
  ["Compare", "compare"], ["Rolling Profit", "rolling"], ["Positions", "positions"], ["Position Metrics", "metrics"], ["Periodic Returns", "periodic"],
  ["Monthly Returns", "monthly"], ["Metrics Report", "report"], ["Equity Curve", "equity"], ["Drawdown Curve", "drawdown"], ["Distributions", "dist"],
  ["Contribution", "contribution"], ["By Symbol", "symbol"], ["Analysis Series", "analysis"], ["Streaks", "streaks"],
];

const Pair = ({ k, v, muted }) => (
  <div className="flex h-[30px] items-center justify-between"><span>{k}</span><span className={muted ? "text-[#8c8c8c]" : ""}>{v}</span></div>
);

const StrategyWindow = () => (
  <Win
    icon={<FaCubes size={22} />}
    title="Building Block Strategy - My Strategies\CB 5min GMA Market Test 2 Live"
    className="absolute top-[604px] right-[76px] left-[754px] h-[694px] rounded-[6px]"
  >
    <div className="flex h-9 shrink-0 items-center gap-[6px] pt-[1px] pl-[5px]">
      <Btn icon={<FaSave size={21} />}>Save</Btn>
      <Btn icon={<FaSave size={21} />}>Save As ...</Btn>
      <Btn icon={<FaClone size={21} />}>Clone</Btn>
      <Btn icon={<Export />}>Export</Btn>
      <Btn icon={<FaLock size={20} />}>Lock</Btn>
      <Sep />
      <Btn icon={<FaChevronCircleRight size={20} />} tone="border-black bg-[#98fb98]" pad="px-[10px]">Run Backtest</Btn>
      <Sep />
      <Btn icon={<FaCogs size={21} className="text-[#555]" />}>Optimize</Btn>
      <Sep />
      <Btn icon={<CSharp />}>Open as C# Coded Strategy</Btn>
      <Btn icon={<FaCubes size={22} />}>View Building Blocks</Btn>
    </div>
    <div role="tablist" className="flex h-[42px] shrink-0 items-end border-b-2 border-[#b4b4b4] bg-[#d6ecf4] pl-[3px]">
      <Tab>Strategy Settings</Tab>
      <Tab>Design Surface</Tab>
      <Tab active>Backtest Results</Tab>
      <Tab>Chart</Tab>
    </div>
    <div className="flex min-h-0 flex-1 flex-col border-b-2 border-[#b4b4b4] bg-[#d6ecf4] px-[10px] pb-2">
      <h3 className="mt-[11px] font-bold">Performance Visualizers</h3>
      <p>You can control which Performance Visualizers appear below in <a href="#prefs" className="underline">Backtest Preferences</a>.</p>
      <div role="tablist" className="mt-[10px] flex h-[43px] shrink-0 items-end border-b-2 border-[#b4b4b4] pl-1">
        {vizTabs.map(([name, icon]) => <Tab key={name} icon={TabIcon[icon]} active={name === "Positions"}>{name}</Tab>)}
      </div>
      <div className="flex min-h-0 flex-1 flex-col border-x-2 border-b-2 border-[#c0c0c0] bg-[#f5f5f5] px-[3px] pb-[2px]">
        <div className="flex shrink-0 gap-[30px] pt-[9px] pb-1 pl-[11px]">
          <div className="flex w-[244px] flex-col gap-[6px]"><Pair k="Open Positions:" v="0" /><Pair k="Total Size:" v="0.00" /></div>
          <div className="flex w-[235px] flex-col gap-[6px]"><Pair k="Open Profit:" v="0.00" muted /><Pair k="Open Profit %:" v="0.00%" muted /></div>
          <div className="flex flex-col gap-[6px]">
            <div className="flex gap-[6px]">
              <Btn icon={<ToTop />}>Open Positions to Top</Btn>
              <Btn icon={<FaQuoteLeft size={16} />}>Send Open Positions to Quotes</Btn>
            </div>
            <div className="flex items-center gap-3">
              <label htmlFor="psf">Symbol Filter:</label>
              <input id="psf" className="h-[29px] w-[120px] border-2 border-[#b6b6b6] bg-[#f8f8f8]" />
            </div>
          </div>
        </div>
        <div className="min-h-0 flex-1 overflow-hidden border-2 border-[#b6b6b6] bg-[#f8f8f8] pt-[1px] pl-1">
          <Table cols={posCols}>
            <tbody>
              {positions.map((p) => (
                <tr key={p[2]} className="odd:h-[35px] even:h-9">
                  <Td><span className="flex items-center gap-[6px]"><Tri up strong />Long</span></Td>
                  <Td>{p[0]}</Td>
                  <Td right>{p[1]}</Td>
                  <Td right>{p[2]}</Td>
                  <Td right>{p[3]}</Td>
                  <Td right>{p[4]}</Td>
                  <Td right>{p[5]}</Td>
                  <Td right color={sign(p[6])}>{p[6]}</Td>
                  <Td right color={sign(p[7])}>{p[7]}</Td>
                  <Td right>{p[8]}</Td>
                  <Td>Buy At Mar...</Td>
                  <Td>Sell At Mar...</Td>
                  <Td />
                  <Td right color={sign(p[9])}>{p[9]}</Td>
                  <Td right color={sign(p[10])}>{p[10]}</Td>
                  <Td right color={sign(p[11])}>{p[11]}</Td>
                  <Td right color={sign(p[12])}>{p[12]}</Td>
                </tr>
              ))}
            </tbody>
          </Table>
        </div>
      </div>
    </div>
    <footer className="flex h-[35px] shrink-0 items-center gap-[9px] pl-[5px] whitespace-nowrap">
      <span className="w-[240px]">99 Symbol(s) Loaded</span>
      <span className="text-[#008000]">Backtest Complete</span>
      <Sep />
      <span>Profit: <span className="text-[#ff0000]">-3,324.35 -3.32%</span></span>
      <Sep />
      <span>Benchmark Profit: <span className="text-[#008000]">5,847.11 5.85%</span></span>
    </footer>
  </Win>
);

/* ---------- shell ---------- */

const ToolStrip = () => (
  <div className="w-[43px] shrink-0 bg-[#f8f8f8]">
    <button type="button" aria-label="Pointer" className="flex h-[42px] w-full items-center justify-center border-2 border-[#b4b4b4] bg-[#c8c8c8]"><FaMousePointer size={28} className="text-[#212529]" /></button>
    <button type="button" aria-label="No drawing" className="mb-[14px] flex h-[42px] w-full items-center justify-center border-2 border-[#b4b4b4] bg-[#c8c8c8]"><Ban size={32} /></button>
    {drawTools.map((group, i) => (
      <div key={i} className="mb-[13px]">
        {group.map(([name, art]) => (
          <button type="button" aria-label={name} key={name} className="flex h-[42px] w-full items-center justify-center border-2 border-[#d2d2d2] bg-[#e0e0e0]">
            {art.type === "g" ? (
              <svg width="34" height="34" viewBox="0 0 34 34" fill="none" stroke="#8b8b8b" strokeWidth="2" aria-hidden="true">{art}</svg>
            ) : (
              art
            )}
          </button>
        ))}
      </div>
    ))}
  </div>
);

const Taskbar = () => (
  <div className="flex h-[60px] shrink-0 border-t-[11px] border-[#222] bg-[#020206] text-white">
    <button type="button" aria-label="Start" className="flex w-[73px] items-center justify-center pb-2">
      <Svg size={24}><path d="M0 3 L11 1.500 V11.500 H0 Z M12.500 1.300 L24 0 V11.500 H12.500 Z M0 12.500 H11 V22.500 L0 21 Z M12.500 12.500 H24 V24 L12.500 22.700 Z" fill="#fff" /></Svg>
    </button>
    <label className="-mt-[11px] flex w-[514px] items-center gap-4 border-2 border-[#c4c4c4] bg-[#f2f2f2] pl-4 text-[#333]">
      <Svg size={26}><circle cx="15" cy="9" r="7" stroke="#222" strokeWidth="1.800" /><path d="M10 14 L2 22" stroke="#222" strokeWidth="1.800" /></Svg>
      <input aria-label="Search" placeholder="Type here to search" className="flex-1 bg-transparent text-[22px] placeholder:text-[#333]" />
    </label>
    <button type="button" aria-label="Task view" className="flex w-[73px] items-center justify-center pb-2">
      <Svg size={26} box={26}><path d="M2 1 V5 H18 V1 M2 25 V21 H18 V25 M2 8 H18 V18 H2 Z M24 1 V25 M22 9 H26" stroke="#eee" strokeWidth="1.600" /></Svg>
    </button>
    <button type="button" aria-label="Edge" className="flex w-[80px] items-center justify-center pb-2">
      <Svg size={36} box={36}>
        <path d="M18 0 C29 0 36 8 36 15 C36 22 30 25 26 24 C22 23 24 20 24 18 C24 14 20 11 16 11 C8 11 1 18 1 24 C-3 10 6 0 18 0 Z" fill="#3cc6c4" />
        <path d="M1 24 C1 15 7 11 13 11 C18 11 23 13 24 18 C20 13 13 17 13 23 C13 29 20 33 27 31 C31 30 32 28 33 28 C29 34 24 36 18 36 C9 36 2 31 1 24 Z" fill="#1583d8" />
      </Svg>
    </button>
    <button type="button" aria-label="Explorer" className="flex w-[74px] items-center justify-center pb-2">
      <Svg size={36} box={36}>
        <path d="M2 4 H14 L17 8 H34 V30 H2 Z" fill="#ffcf48" /><path d="M2 4 H14 L17 8 H2 Z" fill="#e8a200" />
        <path d="M9 31 V19 H27 V31 H22 V25 H14 V31 Z" fill="#3a96dd" />
      </Svg>
    </button>
    <button type="button" aria-label="Wealth-Lab" className="-mt-[11px] flex w-[74px] items-center justify-center border-b-[3px] border-[#76b9ed] bg-[#3a3c40]"><Flask size={34} /></button>
    <div className="-mt-[11px] ml-auto flex items-center gap-2 pr-9">
      <Svg size={24}><path d="M4 15 L12 7 L20 15" stroke="#fff" strokeWidth="1.800" /></Svg>
      <Svg size={28}><path d="M7 4 H22 V15 H7 Z M14 15 V20 M9 20 H19 M2 4 V19 M0 5 H5 V9 H0 Z" stroke="#fff" strokeWidth="1.500" /></Svg>
      <Svg size={28}><path d="M2 9 H6 L12 4 V20 L6 15 H2 Z" stroke="#fff" strokeWidth="1.500" /><circle cx="18" cy="16" r="5.500" fill="#e81123" /><path d="M15.500 13.500 L20.500 18.500 M20.500 13.500 L15.500 18.500" stroke="#fff" strokeWidth="1.600" /></Svg>
      <div className="pr-3 pl-1 text-center leading-7">9:17 PM<br />11/22/2022</div>
      <Svg size={30}><path d="M2 3 H22 V18 H14 L11 22 V18 H2 Z" stroke="#fff" strokeWidth="1.500" /></Svg>
    </div>
  </div>
);

export default function App() {
  return (
    <div className="flex h-screen w-full flex-col overflow-hidden bg-[#f8f8f8] font-['Open_Sans','Noto_Sans',sans-serif] text-[17px] leading-6 text-[#111]">
      <header className="flex h-[46px] shrink-0 items-center bg-[#e0e0e0] pr-5 pl-2">
        <Flask />
        <h1 className="flex-1 pt-[2px] pl-[9px] text-[20px]">Wealth-Lab 8 Build 22 - Building Block Strategy - My Strategies\CB 5min GMA Market Test 2 Live</h1>
        <div className="flex gap-[34px]">
          <button type="button" aria-label="Minimize"><Svg><path d="M4 12 H20" stroke="#111" strokeWidth="2.400" /></Svg></button>
          <button type="button" aria-label="Restore"><Svg><path d="M3 8 H16 V21 H3 Z M7 8 V3 H21 V17 H16" stroke="#111" strokeWidth="2.400" /></Svg></button>
          <button type="button" aria-label="Close"><Svg><path d="M4 4 L20 20 M20 4 L4 20" stroke="#111" strokeWidth="2.400" /></Svg></button>
        </div>
      </header>
      <nav className="flex h-[37px] shrink-0 items-center gap-5 pl-[15px]">
        {["File", "Edit", "View", "Theme", "Tools", "Extensions", "Workspaces", "Window", "Help"].map((m) => (
          <button type="button" key={m} disabled={m === "Edit"} className="disabled:text-[#b0b0b0]">{m}</button>
        ))}
      </nav>
      <div className="flex h-9 shrink-0 items-start gap-[6px] pl-[7px]">
        <Btn icon={<BsGraphUp size={20} />} pad="pl-[3px] pr-[7px]">Chart</Btn>
        <Select label="New Strategy" value="New Strategy" width="w-[150px]" />
        <Btn icon={<FaQuoteLeft size={18} />} pad="pl-[3px] pr-[7px]">Quotes</Btn>
        <Sep />
        <Btn icon={<FaDatabase size={20} />}>Data Manager</Btn>
        <Btn icon={<BsBroadcast size={21} />}>Strategy Monitor</Btn>
        <Btn icon={<BsWifi size={21} className="text-[#ff7a8c]" />}>Order Manager</Btn>
        <Sep />
        <Btn icon={<BsGlobe size={20} />}>DataSets</Btn>
        <Btn icon={<Sine color="#212529" size={22} />}>Indicators</Btn>
        <Btn icon={<Head size={22} color="#212529" />}>Strategies</Btn>
        <Sep />
        <Btn icon={<BsSliders size={20} className="rotate-90" />}>Preferences</Btn>
      </div>
      <main className="flex min-h-0 flex-1">
        <BlocksPanel />
        <div className="relative grid min-w-0 flex-1 grid-rows-[971fr_973fr] bg-[#778899]">
          <div className="grid min-h-0 grid-cols-[1302fr_2012fr]"><StrategyMonitor /><OrderManager /></div>
          <div className="grid min-h-0 grid-cols-[1657fr_1657fr]"><Accounts /><LogWindow /></div>
          <StrategyWindow />
        </div>
        <ToolStrip />
      </main>
      <footer className="flex h-[37px] shrink-0 items-center gap-[6px] pr-4 pl-[7px] whitespace-nowrap">
        <span>mike_001: License renews in 25 days</span><Sep /><span>Admin</span><Sep />
        <span className="flex items-center gap-1"><span className="h-[17px] w-[17px] rounded-full border-[3px] border-black bg-[#0000ff]" />Insample / Out of Sample: [SC#9fc297 BT#251e6be] Calculated 356&nbsp; metrics for 99 symbols, 508 days in 2205 ms</span>
        <span className="flex-1" />
        <Select label="Market" value="Cryptos" width="w-[131px]" />
        <span className="flex gap-3"><span>U: 21:17:20</span><span>Local: 21:17:20</span></span>
      </footer>
      <Taskbar />
    </div>
  );
}
